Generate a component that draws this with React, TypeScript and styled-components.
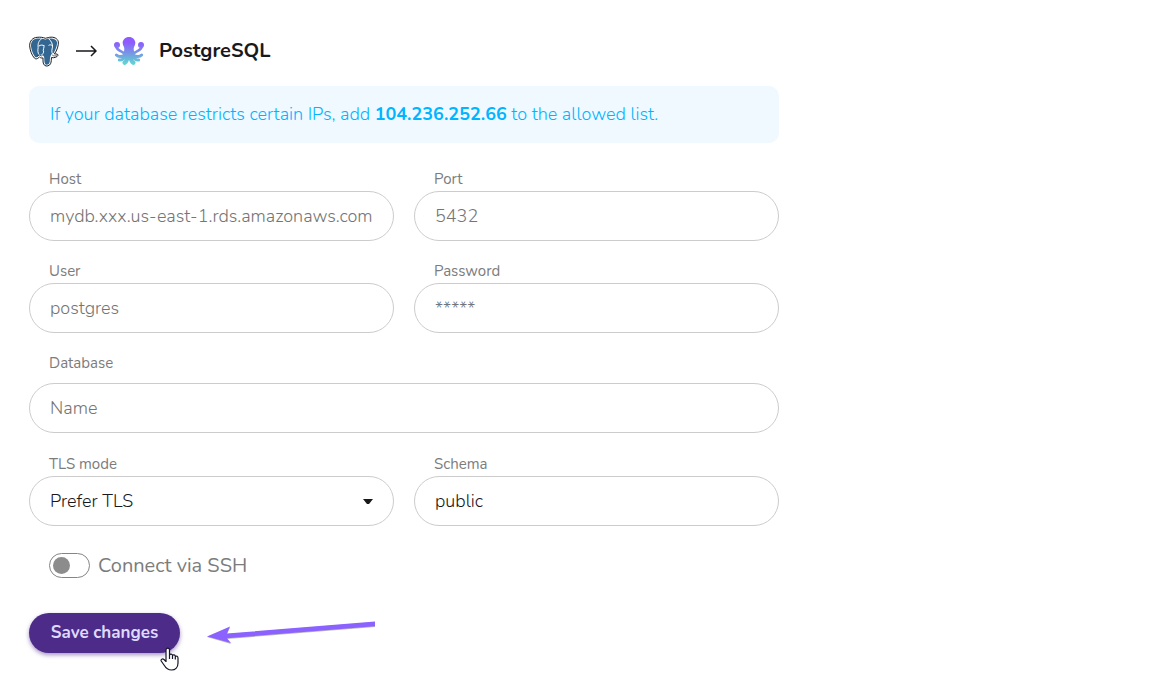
import React from "react";
import styled, { createGlobalStyle } from "styled-components";

const GlobalStyle = createGlobalStyle`
  *, *::before, *::after { box-sizing: border-box; }
  body {
    margin: 0;
    background: #fff;
    color: #19191c;
    font-family: Nunito, Lato, "Liberation Sans", sans-serif;
    font-size: 18px;
    font-weight: 300;
    line-height: 24px;
  }
  input, select, button { font: inherit; color: inherit; }
`;

const Page = styled.main`
  max-width: 808px;
  padding: 29px;
`;

const Header = styled.header`
  display: flex;
  align-items: center;
  height: 44px;
  margin-bottom: 13px;
`;

const ArrowIcon = styled.svg`
  margin: 0 17px;
`;

const Title = styled.h1`
  margin: 0 0 0 15px;
  font-size: 20px;
  font-weight: 700;
`;

const Notice = styled.p`
  margin: 0 0 25px;
  padding: 16px 21px 17px;
  border-radius: 10px;
  background: #f0f9ff;
  color: #00b4ff;
  strong { font-weight: 700; }
`;

const Form = styled.form`
  display: grid;
  grid-template-columns: 1fr 1fr;
  gap: 19px 20px;
`;

const Field = styled.div<{ $wide?: boolean }>`
  display: flex;
  flex-direction: column;
  gap: ${(p) => (p.$wide ? 8 : 0)}px;
  margin-bottom: ${(p) => (p.$wide ? 1 : 0)}px;
  grid-column: ${(p) => (p.$wide ? "1 / -1" : "auto")};
`;

const Label = styled.label`
  padding-left: 20px;
  font-size: 15px;
  font-weight: 400;
  line-height: 23px;
  color: #7c7c7c;
`;

const TextInput = styled.input`
  width: 100%;
  height: 50px;
  padding: 0 20px;
  border: 1px solid #ccc;
  border-radius: 25px;
  background: #fff;
  &::placeholder { color: #757575; opacity: 1; }
`;

const SelectBox = styled.div`
  position: relative;
`;

const Select = styled.select`
  display: block;
  appearance: none;
  width: 100%;
  height: 50px;
  padding: 0 20px 1px;
  border: 1px solid #ccc;
  border-radius: 25px;
  background: #fff;
`;

const Caret = styled.svg`
  position: absolute;
  top: 23px;
  right: 21px;
  pointer-events: none;
`;

const ToggleRow = styled.label`
  grid-column: 1 / -1;
  display: flex;
  align-items: center;
  gap: 8px;
  margin-top: 8px;
  padding-left: 20px;
  font-size: 20px;
  font-weight: 400;
  color: #7c7c7c;
`;

const Toggle = styled.input`
  appearance: none;
  width: 41px;
  height: 25px;
  margin: 0;
  padding: 3px;
  border: 1px solid #858585;
  border-radius: 13px;
  &::before {
    content: "";
    display: block;
    width: 17px;
    height: 17px;
    border-radius: 50%;
    background: #8c8c8c;
  }
  &:checked::before { margin-left: 16px; }
`;

const Actions = styled.div`
  grid-column: 1 / -1;
  display: flex;
  align-items: flex-start;
  gap: 24px;
  margin-top: 16px;
`;

const ButtonWrap = styled.div`
  position: relative;
`;

const SaveButton = styled.button`
  min-width: 151px;
  height: 40px;
  padding: 0 20px;
  border: 0;
  border-radius: 20px;
  background: #4d2b89;
  box-shadow: 0 2px 4px rgba(77, 43, 137, 0.5);
  color: #dfd9fb;
  font-size: 17px;
  font-weight: 700;
`;

const Pointer = styled.svg`
  position: absolute;
  right: 1px;
  bottom: -18px;
`;

const PostgresLogo = () => (
  <svg width="30" height="31" viewBox="-1 -1 92 93" role="img" aria-label="PostgreSQL">
    <path
      d="M24 2C10 3 1 13 1 28C2 42 8 58 16 66C22 71 27 66 31 62C35 66 39 66 42 65C42 74 41 83 47 88C52 92 62 90 65 83C68 77 67 70 68 64C75 66 86 63 88 57C88 53 83 53 77 53C85 42 90 27 89 16C87 5 75 0 62 2C56 3 53 4 49 5C42 2 34 1 24 2Z"
      fill="#fff" stroke="#16181c" strokeWidth="3"
    />
    <path
      d="M24 6C12 7 5 15 5 28C6 40 12 56 18 62C21 65 25 62 30 56C33 59 37 58 42 58C46 60 46 65 46 72C46 79 48 87 54 86C62 86 63 78 63 70C64 63 65 58 68 54C70 51 72 51 75 50C81 38 86 25 85 17C83 7 71 4 60 6C56 6 53 8 49 9C42 6 34 5 24 6Z"
      fill="#336791"
    />
    <path
      d="M38 6C28 13 26 22 27 33C26 43 25 50 31 56C37 60 41 54 44 47C40 41 47 32 45 26M59 6C68 14 72 23 71 32C69 40 68 47 71 53M29 29C34 25 42 25 45 28M59 27C63 24 67 25 70 27"
      fill="none" stroke="#fff" strokeWidth="3"
    />
    <path d="M23 61L31 56L38 60M70 56C74 60 80 60 84 57" fill="none" stroke="#16181c" strokeWidth="2" />
  </svg>
);

const OctopusLogo = () => (
  <svg width="30" height="28" viewBox="0 0 90 84" aria-hidden="true">
    <defs>
      <linearGradient id="octopus" gradientUnits="userSpaceOnUse" x1="45" y1="0" x2="45" y2="84">
        <stop offset="0.2" stopColor="#8f5bff" />
        <stop offset="0.55" stopColor="#7893e6" />
        <stop offset="1" stopColor="#5cdcd0" />
      </linearGradient>
    </defs>
    <path
      d="M45 0C34 0 26 8 26 18C26 25 31 29 31 35C31 42 29 46 25 50L38 60H52L65 50C61 46 59 42 59 35C59 29 64 25 64 18C64 8 56 0 45 0Z"
      fill="url(#octopus)"
    />
    <circle cx="9" cy="24" r="9" fill="url(#octopus)" />
    <circle cx="81" cy="24" r="9" fill="url(#octopus)" />
    <path
      d="M7 27C7 42 22 40 32 50M83 27C83 42 68 40 58 50"
      fill="none" stroke="url(#octopus)" strokeWidth="8" strokeLinecap="round"
    />
    <path
      d="M34 53C24 59 13 60 7 54M56 53C66 59 77 60 83 54M36 55C30 66 21 70 16 69M54 55C60 66 69 70 74 69"
      fill="none" stroke="url(#octopus)" strokeWidth="9" strokeLinecap="round"
    />
    <path
      d="M40 55C40 68 37 75 32 77M50 55C50 68 53 75 58 77"
      fill="none" stroke="url(#octopus)" strokeWidth="13" strokeLinecap="round"
    />
  </svg>
);

interface TextFieldProps {
  id: string;
  label: string;
  placeholder?: string;
  value?: string;
  type?: string;
  wide?: boolean;
}

const TextField = ({ id, label, placeholder, value, type = "text", wide }: TextFieldProps) => (
  <Field $wide={wide}>
    <Label htmlFor={id}>{label}</Label>
    <TextInput id={id} type={type} placeholder={placeholder} defaultValue={value} />
  </Field>
);

export default function App() {
  return (
    <>
      <GlobalStyle />
      <Page>
        <Header>
          <PostgresLogo />
          <ArrowIcon width="21" height="12" viewBox="0 0 21 12" aria-hidden="true">
            <path d="M0 6H20M15 1L20 6L15 11" fill="none" stroke="#19191c" strokeWidth="1.5" />
          </ArrowIcon>
          <OctopusLogo />
          <Title>PostgreSQL</Title>
        </Header>
        <Notice>
          If your database restricts certain IPs, add <strong>104.236.252.66</strong> to the allowed list.
        </Notice>
        <Form onSubmit={(e) => e.preventDefault()}>
          <TextField id="host" label="Host" placeholder="mydb.xxx.us-east-1.rds.amazonaws.com" />
          <TextField id="port" label="Port" placeholder="5432" />
          <TextField id="user" label="User" placeholder="postgres" />
          <TextField id="password" label="Password" type="password" placeholder="*****" />
          <TextField id="database" label="Database" placeholder="Name" wide />
          <Field>
            <Label htmlFor="tls">TLS mode</Label>
            <SelectBox>
              <Select id="tls" defaultValue="prefer">
                <option value="prefer">Prefer TLS</option>
              </Select>
              <Caret width="10" height="5" viewBox="0 0 10 5" aria-hidden="true">
                <path d="M0 0H10L6 5H4Z" fill="#19191c" />
              </Caret>
            </SelectBox>
          </Field>
          <TextField id="schema" label="Schema" value="public" />
          <ToggleRow>
            <Toggle type="checkbox" role="switch" />
            Connect via SSH
          </ToggleRow>
          <Actions>
            <ButtonWrap>
              <SaveButton type="submit">Save changes</SaveButton>
              <Pointer width="19" height="24" viewBox="0 0 19 24" aria-hidden="true">
                <path
                  d="M6 15V3C6 0.500 9.500 0.500 9.500 3V8C10 6.500 12.500 6.800 12.500 8.500C13.200 7.300 15.300 7.800 15.300 9.500C16.500 8.600 18 9.300 18 11V16C18 20 15.500 23 11.500 23C7.500 23 5.500 20.500 4 18L1.200 14C0.500 12.500 2.500 11.300 4 12.500L6 14.500"
                  fill="#fff" stroke="#15152a" strokeWidth="1.200" strokeLinejoin="round"
                />
                <path d="M9.500 8V12M12.500 9V12M15.300 10V12.500" stroke="#15152a" strokeWidth="1.200" />
              </Pointer>
            </ButtonWrap>
            <svg width="176" height="36" viewBox="0 0 176 36" aria-hidden="true">
              <path d="M3 24L26 14.500L23 21L171 9V14L23 26L27 31Z" fill="#777" opacity="0.5" />
              <path d="M3 23.500L26 13.500L23 20.500L171 8.500V13.200L23 25.300L27 30Z" fill="#8b62ff" />
            </svg>
          </Actions>
        </Form>
      </Page>
    </>
  );
}
